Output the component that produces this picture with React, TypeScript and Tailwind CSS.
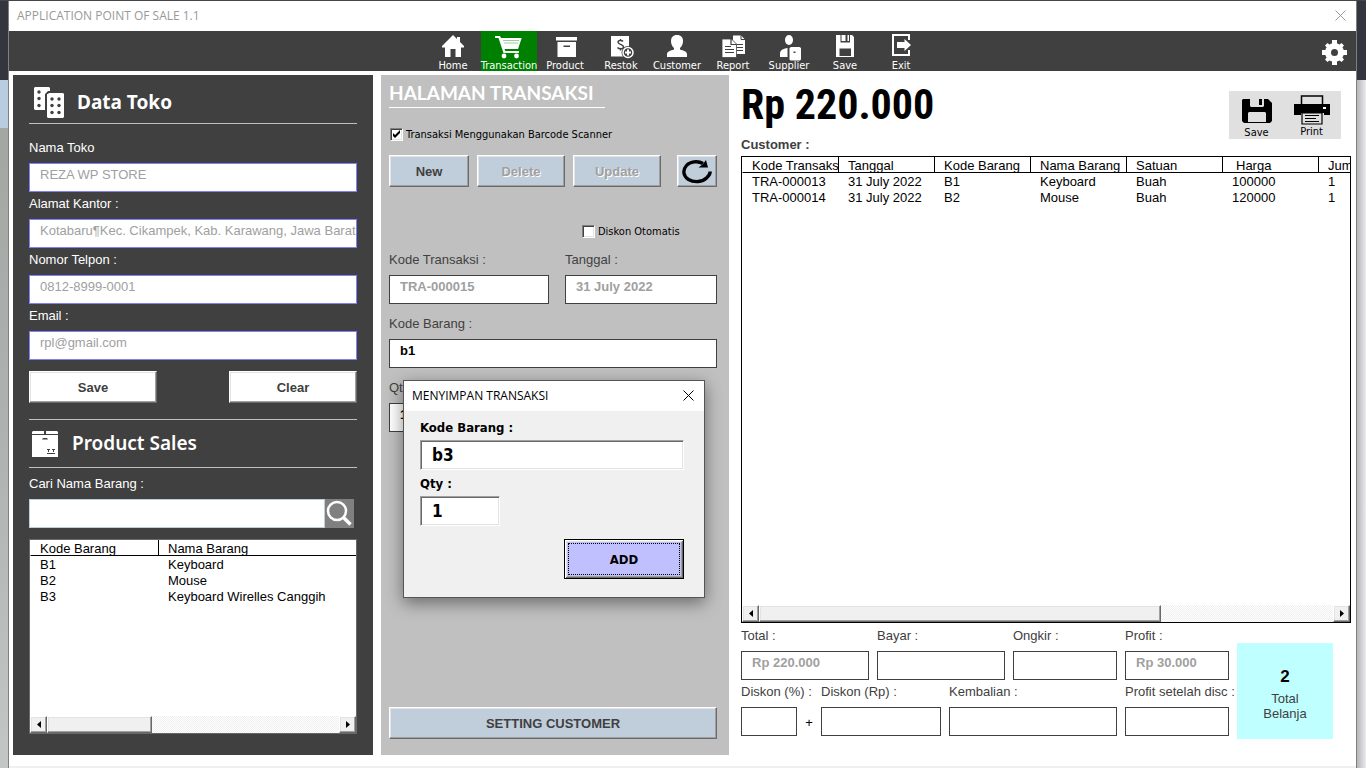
import React, { useId } from "react";

const DARK = "#404040";

const raised =
  "border border-t-white border-l-white border-r-[#696969] border-b-[#696969] shadow-[inset_-1px_-1px_0_#a0a0a0,inset_1px_1px_0_#e3e3e3]";

const smallFont = "font-['DejaVu_Sans_Condensed','DejaVu_Sans',sans-serif] text-[11px]";

function HomeIcon() {
  return <path d="M14 1L3 12v1.500h3V23h5.500v-8h5v8H22v-9.500h3V12l-4-4V3h-3v2z" />;
}
function CartIcon() {
  return (
    <>
      <path d="M0 2h5l1 2h20.700L23 15H9.500l.8 2H24v2H8.500L3.500 4H0z" />
      <path d="M8 6.500h16M9 9h14" stroke="#008000" strokeWidth="0.400" />
      <circle cx="9" cy="22" r="2.400" />
      <circle cx="21.500" cy="22" r="2.400" />
    </>
  );
}
function ProductIcon() {
  return (
    <>
      <path d="M5 3h21v3.500H5zM6.500 8H25v15H6.500z" />
      <path d="M12.500 11.500h6.500V13h-6.500z" fill={DARK} />
    </>
  );
}
function RestockIcon() {
  return (
    <>
      <path d="M4 2h18v20.500H4z" />
      <path d="M16 7.500c-1-1.500-5-1.500-5 .8 0 2.500 5.500 1.700 5.500 4.700 0 2.300-4.500 2.300-6 .5M13.500 5v2M13.500 14.500v2" fill="none" stroke={DARK} strokeWidth="1.400" />
      <circle cx="21" cy="18.500" r="6.500" fill={DARK} />
      <circle cx="21" cy="18.500" r="5" stroke="white" strokeWidth="1.500" fill={DARK} />
      <path d="M21 15.500v6M18 18.500h6" stroke="white" strokeWidth="2" />
    </>
  );
}
function CustomerIcon() {
  return (
    <path d="M14 1c4 0 6 2.500 6 6 0 3-1.200 5.500-3 7v1.500c3.500 1 7 2 7 4.500v3H4v-3c0-2.500 3.500-3.500 7-4.500V14c-1.800-1.500-3-4-3-7 0-3.500 2-6 6-6z" />
  );
}
function ReportIcon() {
  return (
    <>
      <path d="M14 1.500h8l4 4V20H14z" />
      <path d="M18 10.500h6M18 13.500h6M18 16.500h6" stroke={DARK} />
      <path d="M22 1.500v4h4" fill="none" stroke={DARK} />
      <path d="M3 5h9.500l5 5v13.500H3z" stroke={DARK} strokeWidth="0.800" />
      <path d="M6 12.500h6M6 15.500h9M6 18.500h9" stroke={DARK} strokeWidth="1.100" />
      <path d="M12 5v5.500h5.500" fill="none" stroke={DARK} strokeWidth="1.200" />
    </>
  );
}
function SupplierIcon() {
  return (
    <>
      <ellipse cx="14" cy="6" rx="4" ry="5" />
      <path d="M5 23v-3.500c0-3 3-5 7.500-5.500V23zM14.500 14l1.500-1h8.500l1.500 1v11.500l-1 1H15.500l-1-1z" />
      <path d="M18.500 17.500h2v1.500h-2z" fill={DARK} />
    </>
  );
}
function SaveIcon() {
  return (
    <>
      <path d="M5 1h16l2 2v20H5z" />
      <path d="M9.500 1h9.500v7.500H9.500zM8.500 14.500h11.500V22H8.500z" fill={DARK} />
      <path d="M10.500 1h4v6h-4zM16.500 1h1.500v6h-1.500z" />
    </>
  );
}
function ExitIcon() {
  return (
    <>
      <path d="M5 0h18v6h-2V2H7v18h14v-4h2v6H5z" />
      <path d="M10 8h7.500V5l6.500 6-6.500 6v-3H10z" />
    </>
  );
}

const tools = [
  { name: "Home", Icon: HomeIcon },
  { name: "Transaction", Icon: CartIcon, active: true },
  { name: "Product", Icon: ProductIcon },
  { name: "Restok", Icon: RestockIcon },
  { name: "Customer", Icon: CustomerIcon },
  { name: "Report", Icon: ReportIcon },
  { name: "Supplier", Icon: SupplierIcon },
  { name: "Save", Icon: SaveIcon },
  { name: "Exit", Icon: ExitIcon },
];

function Cross({ className }: { className: string }) {
  return (
    <svg viewBox="0 0 11 11" className={className} fill="none" stroke="currentColor">
      <path d="M0.500 0.500l10 10M10.500 0.500l-10 10" />
    </svg>
  );
}

type FieldProps = {
  label: string;
  value?: string;
  className?: string;
  labelClass?: string;
  inputClass?: string;
  readOnly?: boolean;
};

function Field({
  label,
  value = "",
  className = "",
  labelClass = "text-[#404040]",
  inputClass = "border-[#404040] font-bold text-[#a0a0a0]",
  readOnly = true,
}: FieldProps) {
  const id = useId();
  return (
    <div className={`flex min-w-0 flex-col ${className}`}>
      <label htmlFor={id} className={`mb-[3px] whitespace-nowrap leading-6 ${labelClass}`}>
        {label}
      </label>
      <input
        id={id}
        defaultValue={value}
        readOnly={readOnly}
        className={`h-[29px] w-full border bg-white pr-0 pb-[6px] pl-[10px] outline-none ${inputClass}`}
      />
    </div>
  );
}

function Check({ label, checked = false }: { label: string; checked?: boolean }) {
  return (
    <label className={`flex h-[13px] items-center gap-[3px] text-black ${smallFont}`}>
      <span className="grid size-[13px]">
        <input
          type="checkbox"
          defaultChecked={checked}
          className="peer col-start-1 row-start-1 size-[13px] appearance-none border border-t-[#808080] border-r-white border-b-white border-l-[#808080] bg-white shadow-[inset_1px_1px_0_#404040,inset_-1px_-1px_0_#e3e3e3]"
        />
        <svg viewBox="0 0 13 13" className="pointer-events-none invisible col-start-1 row-start-1 size-[13px] peer-checked:visible">
          <path d="M3 5v3l2 2 5-5V2L5 7z" fill="black" />
        </svg>
      </span>
      <span className="pt-[2px]">{label}</span>
    </label>
  );
}

function ScrollBar({ thumb }: { thumb: string }) {
  const cap = `flex h-[17px] w-[17px] shrink-0 items-center justify-center bg-[#f0f0f0] ${raised}`;
  return (
    <div className="flex h-[17px] shrink-0">
      <button aria-label="Scroll left" className={cap}>
        <svg viewBox="0 0 4 7" className="h-[7px] w-1">
          <path d="M4 0v7L0 3.500z" />
        </svg>
      </button>
      <div className="flex-1 bg-[repeating-conic-gradient(#f0f0f0_0_25%,#ffffff_0_50%)] bg-[length:2px_2px]">
        <div className={`h-[17px] bg-[#f0f0f0] ${raised} ${thumb}`} />
      </div>
      <button aria-label="Scroll right" className={cap}>
        <svg viewBox="0 0 4 7" className="h-[7px] w-1">
          <path d="M0 0v7l4-3.500z" />
        </svg>
      </button>
    </div>
  );
}

type GridProps = { widths: string[]; head: string[]; rows: string[][]; className: string };

function DataTable({ widths, head, rows, className }: GridProps) {
  return (
    <div className="min-h-0 flex-1 overflow-hidden">
      <table className={`table-fixed border-separate border-spacing-0 text-left text-black ${className}`}>
        <colgroup>
          {widths.map((w, i) => (
            <col key={i} className={w} />
          ))}
        </colgroup>
        <thead>
          <tr>
            {head.map((h) => (
              <th
                key={h}
                className={`h-4 overflow-hidden border-b border-l border-b-black border-l-black p-0 pt-[2px] leading-[13px] font-normal whitespace-nowrap first:border-l-transparent ${h === "Harga" ? "pl-[13px]" : "pl-[9px]"}`}
              >
                {h}
              </th>
            ))}
          </tr>
        </thead>
        <tbody>
          {rows.map((r) => (
            <tr key={r[0]}>
              {r.map((c, i) => (
                <td key={i} className="h-4 overflow-hidden p-0 pt-px pl-[10px] leading-[15px] whitespace-nowrap">
                  {c}
                </td>
              ))}
            </tr>
          ))}
        </tbody>
      </table>
    </div>
  );
}

function StorePanel() {
  const label = "text-white";
  const input = "border-[#8080ff] text-[#a0a0a0]";
  const button = `h-8 w-32 bg-white pt-px text-[13px] font-bold text-[#404040] ${raised}`;
  return (
    <section className="mb-[11px] flex w-[360px] shrink-0 flex-col bg-[#404040] px-4 pb-[21px]">
      <header className="flex h-[49px] items-center gap-[13px] border-b border-[#c0c0c0] pt-[6px] pl-1">
        <svg viewBox="0 0 31 31" className="size-[31px]" fill="white">
          <path d="M1 1l1-1h14l1 1v3h-2l-3 3v16H2l-1-1z" />
          <path d="M15 7l1-1h14l1 1v23l-1 1H15l-1-1V7z" />
          <g fill={DARK}>
            <circle cx="6" cy="5" r="1.700" /><circle cx="6" cy="11.500" r="1.700" /><circle cx="6" cy="18.500" r="1.700" />
            <circle cx="19" cy="12" r="1.700" /><circle cx="19" cy="18.500" r="1.700" /><circle cx="19" cy="25.500" r="1.700" />
            <circle cx="26" cy="12" r="1.700" /><circle cx="26" cy="18.500" r="1.700" /><circle cx="26" cy="25.500" r="1.700" />
          </g>
        </svg>
        <h2 className="font-['Noto_Sans',sans-serif] text-[19px] font-bold text-white">Data Toko</h2>
      </header>
      <div className="mt-3 flex flex-col">
        <Field label="Nama Toko" value="REZA WP STORE" labelClass={label} inputClass={input} />
        <Field label="Alamat Kantor :" value="Kotabaru¶Kec. Cikampek, Kab. Karawang, Jawa Barat" labelClass={label} inputClass={input} />
        <Field label="Nomor Telpon :" value="0812-8999-0001" labelClass={label} inputClass={input} />
        <Field label="Email :" value="rpl@gmail.com" labelClass={label} inputClass={input} />
      </div>
      <div className="mt-[11px] flex justify-between">
        <button className={button}>Save</button>
        <button className={button}>Clear</button>
      </div>
      <header className="mt-4 flex h-[49px] items-center gap-[14px] border-y border-[#c0c0c0] pl-[3px]">
        <svg viewBox="0 0 26 26" className="size-[26px]" fill="white">
          <path d="M1 0h11v3H0V1zM14 0h11l1 1v2H14zM0 4h26v22H0z" />
          <path d="M10 8.500l1-1.500h4l1 1.500zM15 22h8v1h-8zM16 19h1v2h-1zM15 18h3v1h-3zM21 19h1v2h-1zM20 18h3v1h-3z" fill={DARK} />
        </svg>
        <h2 className="font-['Noto_Sans',sans-serif] text-[19px] font-semibold text-white">Product Sales</h2>
      </header>
      <label htmlFor="search" className="mt-1 mb-[3px] leading-6 text-white">
        Cari Nama Barang :
      </label>
      <div className="mr-[3px] flex h-[29px]">
        <input id="search" className="min-w-0 flex-1 border border-[#c0cddb] bg-white px-[10px] outline-none" />
        <button aria-label="Cari" className="flex w-[29px] items-start bg-[#808080] pl-px">
          <svg viewBox="0 0 26 26" className="mt-px size-[26px]" fill="none" stroke="white">
            <circle cx="11" cy="11" r="9" strokeWidth="2.500" />
            <path d="M17.500 17.500l7 7" strokeWidth="3.500" />
          </svg>
        </button>
      </div>
      <div className="mt-[11px] flex min-h-0 flex-1 flex-col border border-[#696969] bg-white">
        <DataTable
          className="w-full"
          widths={["w-32", "w-auto"]}
          head={["Kode Barang", "Nama Barang"]}
          rows={[
            ["B1", "Keyboard"],
            ["B2", "Mouse"],
            ["B3", "Keyboard Wirelles Canggih"],
          ]}
        />
        <ScrollBar thumb="w-[36%]" />
      </div>
    </section>
  );
}

function AddDialog() {
  const label = "mb-[3px] block leading-[18px]";
  const sunken =
    "block h-[30px] border border-t-[#a0a0a0] border-l-[#a0a0a0] border-r-white border-b-white bg-white pl-[11px] text-[17px] outline-none shadow-[inset_1px_1px_0_#696969,inset_-1px_-1px_0_#e3e3e3]";
  return (
    <div
      role="dialog"
      aria-labelledby="dialog-title"
      className="absolute top-[305px] left-[22px] w-[302px] border border-[#555555] bg-[#f0f0f0] shadow-[0_5px_16px_rgba(0,0,0,0.450)]"
    >
      <header className="flex h-[30px] items-center justify-between bg-white pr-[10px] pl-2">
        <h2 id="dialog-title" className="font-['Open_Sans',sans-serif] text-[12px] text-black">
          MENYIMPAN TRANSAKSI
        </h2>
        <button aria-label="Close" className="pb-[2px] text-black">
          <Cross className="size-[11px]" />
        </button>
      </header>
      <form
        className="flex flex-col pt-2 pr-5 pb-[18px] pl-4 font-['DejaVu_Sans_Condensed','DejaVu_Sans',sans-serif] text-[13px] font-bold text-black"
        onSubmit={(e) => e.preventDefault()}
      >
        <label htmlFor="dlg-kode" className={label}>Kode Barang :</label>
        <input id="dlg-kode" defaultValue="b3" className={`${sunken} w-full`} />
        <label htmlFor="dlg-qty" className={`mt-[5px] ${label}`}>Qty :</label>
        <input id="dlg-qty" defaultValue="1" className={`${sunken} w-20`} />
        <button
          type="submit"
          className="mt-[13px] ml-auto h-10 w-[120px] border border-black bg-[#c0c0ff] p-[3px] shadow-[inset_1px_1px_0_#ffffff,inset_-1px_-1px_0_#696969,inset_2px_2px_0_#e3e3e3,inset_-2px_-2px_0_#a0a0a0]"
        >
          <span className="flex h-full items-center justify-center border border-dotted border-black pt-[2px]">ADD</span>
        </button>
      </form>
    </div>
  );
}

function TransactionPanel() {
  const button = `h-8 bg-[#c0cddb] pt-px text-[13px] font-bold ${raised}`;
  const off = "text-[#a0a0a0] [text-shadow:1px_1px_0_white]";
  const ready = "border-[#404040] font-bold text-black";
  return (
    <section className="relative mb-[11px] flex w-[348px] shrink-0 flex-col bg-[#c0c0c0] pr-3 pb-4 pl-2">
      <h1 className="w-[216px] border-b border-white pt-[6px] pb-[2px] font-['Lato',sans-serif] text-[19px] leading-6 font-bold whitespace-nowrap text-white">
        HALAMAN TRANSAKSI
      </h1>
      <div className="mt-5 pl-px">
        <Check label="Transaksi Menggunakan Barcode Scanner" checked />
      </div>
      <div className="mt-[14px] flex gap-2">
        <button className={`w-20 text-[#404040] ${button}`}>New</button>
        <button disabled className={`w-[88px] ${off} ${button}`}>Delete</button>
        <button disabled className={`w-[88px] ${off} ${button}`}>Update</button>
        <button aria-label="Refresh" className={`ml-auto flex w-10 items-center justify-center ${button}`}>
          <svg viewBox="0 0 30 24" className="h-6 w-[30px]">
            <path d="M21 3.500C16 .5 8 1.500 4.500 5.500 .5 10 1 16 6.500 19.500c6 3.500 14 2.500 18-1.500 2.200-2 3.700-4 3.700-6.500" fill="none" stroke="black" strokeWidth="3.400" />
            <path d="M24 0l2 7.500H16.500l4-3z" />
          </svg>
        </button>
      </div>
      <div className="mt-[38px] ml-[193px]">
        <Check label="Diskon Otomatis" />
      </div>
      <div className="mt-[10px] flex flex-col gap-2">
        <div className="flex gap-4">
          <Field label="Kode Transaksi :" value="TRA-000015" className="w-40" />
          <Field label="Tanggal :" value="31 July 2022" className="flex-1" />
        </div>
        <Field label="Kode Barang :" value="b1" inputClass={ready} readOnly={false} />
        <Field label="Qty :" value="1" className="w-20" inputClass={ready} readOnly={false} />
      </div>
      <button className={`mt-auto w-full text-[#404040] ${button}`}>SETTING CUSTOMER</button>
      <AddDialog />
    </section>
  );
}

function SalesPanel() {
  const action = `flex w-[55px] flex-col items-center leading-3 text-black ${smallFont}`;
  return (
    <section className="mb-[11px] flex min-w-0 flex-1 flex-col pr-[5px] pb-4 pl-1">
      <div className="flex items-start justify-between">
        <div>
          <output className="block h-[60px] font-['Roboto_Condensed','DejaVu_Sans_Condensed',sans-serif] text-[42px] leading-[60px] font-bold whitespace-nowrap text-black">
            Rp 220.000
          </output>
          <p className="pt-px leading-[18px] font-bold text-[#404040]">Customer :</p>
        </div>
        <div className="mt-4 mr-[10px] flex h-12 w-28 items-start bg-[#e0e0e0] pt-1">
          <button className={`gap-[2px] pt-[3px] ${action}`}>
            <svg viewBox="0 0 30 27" className="h-[27px] w-[30px]">
              <path d="M0 2l1-1h25l4 4v18l-2 2H2l-2-2z" />
              <path d="M8 1h14v7l-1 1H9L8 8zM6 15l1-1h16l1 1v9H6z" fill="#e0e0e0" />
              <path d="M17 1h3v6h-3z" />
            </svg>
            Save
          </button>
          <button className={`gap-px ${action}`}>
            <svg viewBox="0 0 36 30" className="h-[30px] w-9">
              <path d="M7.500 1h21v9h-21z" fill="#e0e0e0" stroke="black" strokeWidth="1.500" />
              <path d="M0 9h36v11h-6v-2H7v2H0z" />
              <path d="M29 12h3v2h-3z" fill="white" />
              <path d="M8 18h20v11H8z" fill="#e0e0e0" stroke="black" strokeWidth="1.200" />
              <path d="M11 20.500h14M11 23.500h11M11 26.500h14" stroke="black" />
            </svg>
            Print
          </button>
        </div>
      </div>
      <div className="mt-[2px] flex min-h-0 flex-1 flex-col border border-black bg-white">
        <DataTable
          className="w-[672px]"
          widths={["w-24", "w-24", "w-24", "w-24", "w-24", "w-24", "w-24"]}
          head={["Kode Transaksi", "Tanggal", "Kode Barang", "Nama Barang", "Satuan", "Harga", "Jumlah"]}
          rows={[
            ["TRA-000013", "31 July 2022", "B1", "Keyboard", "Buah", "100000", "1"],
            ["TRA-000014", "31 July 2022", "B2", "Mouse", "Buah", "120000", "1"],
          ]}
        />
        <ScrollBar thumb="w-[70%]" />
      </div>
      <div className="mt-px flex items-start gap-2 pr-[18px]">
        <div className="min-w-0 flex-1">
          <div className="grid grid-cols-[128fr_128fr_104fr_104fr] gap-2">
            <Field label="Total :" value="Rp 220.000" />
            <Field label="Bayar :" />
            <Field label="Ongkir :" />
            <Field label="Profit :" value="Rp 30.000" />
          </div>
          <div className="grid grid-cols-[56fr_8px_120fr_168fr_104fr] gap-2">
            <Field label="Diskon (%) :" />
            <span className="self-end pb-1 text-center text-black">+</span>
            <Field label="Diskon (Rp) :" />
            <Field label="Kembalian :" />
            <Field label="Profit setelah disc :" />
          </div>
        </div>
        <div className="mt-[19px] flex size-24 flex-col items-center justify-center bg-[#c0ffff] pt-[6px] text-center leading-[15px] text-[#404040]">
          <strong className="mb-1 text-[17px] leading-5 text-black">2</strong>
          Total
          <br />
          Belanja
        </div>
      </div>
    </section>
  );
}

export default function App() {
  return (
    <div className="flex min-h-screen flex-col bg-[#f0f0f0] font-['Liberation_Sans',Arial,sans-serif] text-[13px]">
      <div className="h-px bg-[#45454d]" />
      <div className="flex flex-1">
        <div className="flex w-[9px] shrink-0 flex-col border-r border-[#808080]">
          <div className="h-[79px] bg-[#33353f]" />
          <div className="h-12 bg-[#b8cde0]" />
          <div className="flex-1 bg-linear-to-b from-[#a4a6a4] via-[#b0b2b1] to-[#c4c6c5]" />
        </div>
        <div className="mb-[2px] flex min-w-0 flex-1 flex-col bg-white">
          <header className="flex h-[30px] shrink-0 items-center justify-between pr-[10px] pl-2 text-[#999999]">
            <h1 className="font-['Open_Sans',sans-serif] text-[12px]">APPLICATION POINT OF SALE 1.1</h1>
            <button aria-label="Close" className="pb-[2px]">
              <Cross className="size-[11px]" />
            </button>
          </header>
          <nav className="grid h-10 shrink-0 grid-cols-[1fr_auto_1fr] items-center bg-[#404040] pr-[9px] text-white">
            <span />
            <div className="mr-[2px] flex">
              {tools.map(({ name, Icon, active }) => (
                <button
                  key={name}
                  className={`flex h-10 w-14 flex-col items-center pt-[3px] leading-3 ${smallFont} ${active ? "bg-[#008000]" : ""}`}
                >
                  <svg viewBox="0 0 28 28" className="size-7 shrink-0" fill="white">
                    <Icon />
                  </svg>
                  <span className="-mt-[2px] leading-3">{name}</span>
                </button>
              ))}
            </div>
            <button aria-label="Settings" className="justify-self-end">
              <svg viewBox="0 0 25 25" className="mt-[2px] size-[25px]" fill="white">
                <path d="M10 0h5v4h-5zM10 21h5v4h-5zM0 10h4v5H0zM21 10h4v5h-4zM3 5.500L5.500 3l3 2.500-3 3zM22 5.500L19.500 3l-3 2.500 3 3zM3 19.500L5.500 22l3-2.500-3-3zM22 19.500L19.500 22l-3-2.500 3-3z" />
                <circle cx="12.500" cy="12.500" r="6.500" fill="none" stroke="white" strokeWidth="6" />
              </svg>
            </button>
          </nav>
          <main className="flex flex-1 gap-2 pt-1 pl-1">
            <StorePanel />
            <TransactionPanel />
            <SalesPanel />
          </main>
        </div>
        <div className="flex w-[10px] shrink-0 flex-col border-l border-[#808080]">
          <div className="h-[79px] bg-[#33353f]" />
          <div className="flex-1 bg-linear-to-r from-[#b4b5b7] to-[#ececef]" />
        </div>
      </div>
    </div>
  );
}
